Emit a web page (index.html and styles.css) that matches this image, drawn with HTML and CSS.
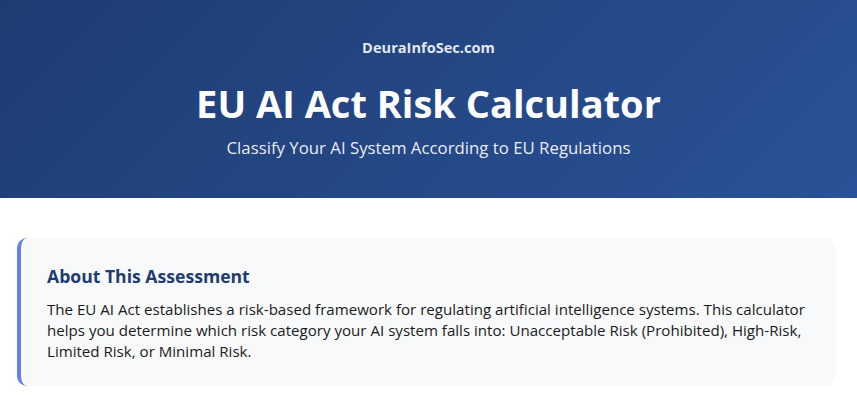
FILE: index.html
```html
<!DOCTYPE html>
<html lang="en">
<head>
<meta charset="utf-8">
<title>EU AI Act Risk Calculator</title>
<link rel="stylesheet" href="styles.css">
</head>
<body>
<header class="hero">
  <div class="brand">DeuraInfoSec.com</div>
  <h1 class="title">EU AI Act Risk Calculator</h1>
  <p class="subtitle">Classify Your AI System According to EU Regulations</p>
</header>
<main class="content">
  <section class="info-card">
    <h2 class="info-title">About This Assessment</h2>
    <p class="info-text">The EU AI Act establishes a risk-based framework for regulating artificial intelligence systems. This calculator helps you determine which risk category your AI system falls into: Unacceptable Risk (Prohibited), High-Risk, Limited Risk, or Minimal Risk.</p>
  </section>
</main>
</body>
</html>
```
FILE: styles.css
```css
* { box-sizing: border-box; }
html, body { margin: 0; padding: 0; background: #ffffff; }
body {
  font-family: "Open Sans", "Noto Sans", sans-serif;
  color: #1a1a1a;
}
.hero {
  height: 198px;
  background: linear-gradient(135deg, #1e3c72 0%, #2a5298 100%);
  color: #ffffff;
  text-align: center;
  padding-top: 38px;
  display: flex;
  flex-direction: column;
  align-items: center;
}
.brand {
  font-size: 14.6px;
  font-weight: 700;
  color: rgba(255,255,255,0.88);
  line-height: 18px;
}
.title {
  margin: 24px 0 0 0;
  font-size: 38px;
  font-weight: 700;
  line-height: 46px;
}
.subtitle {
  margin: 11px 0 0 0;
  font-size: 16.8px;
  line-height: 22px;
  color: rgba(255,255,255,0.92);
}
.content {
  padding: 40px 21px 0 17px;
}
.info-card {
  background: #f8f9fa;
  border-left: 4px solid #667eea;
  border-radius: 10px;
  padding: 25px 26px 24px 26px;
}
.info-title {
  margin: 0 0 10px 0;
  font-size: 17.6px;
  font-weight: 700;
  color: #1e3c72;
  line-height: 26px;
}
.info-text {
  margin: 0;
  font-size: 15.1px;
  line-height: 21px;
  color: #1a1a1a;
}
```
